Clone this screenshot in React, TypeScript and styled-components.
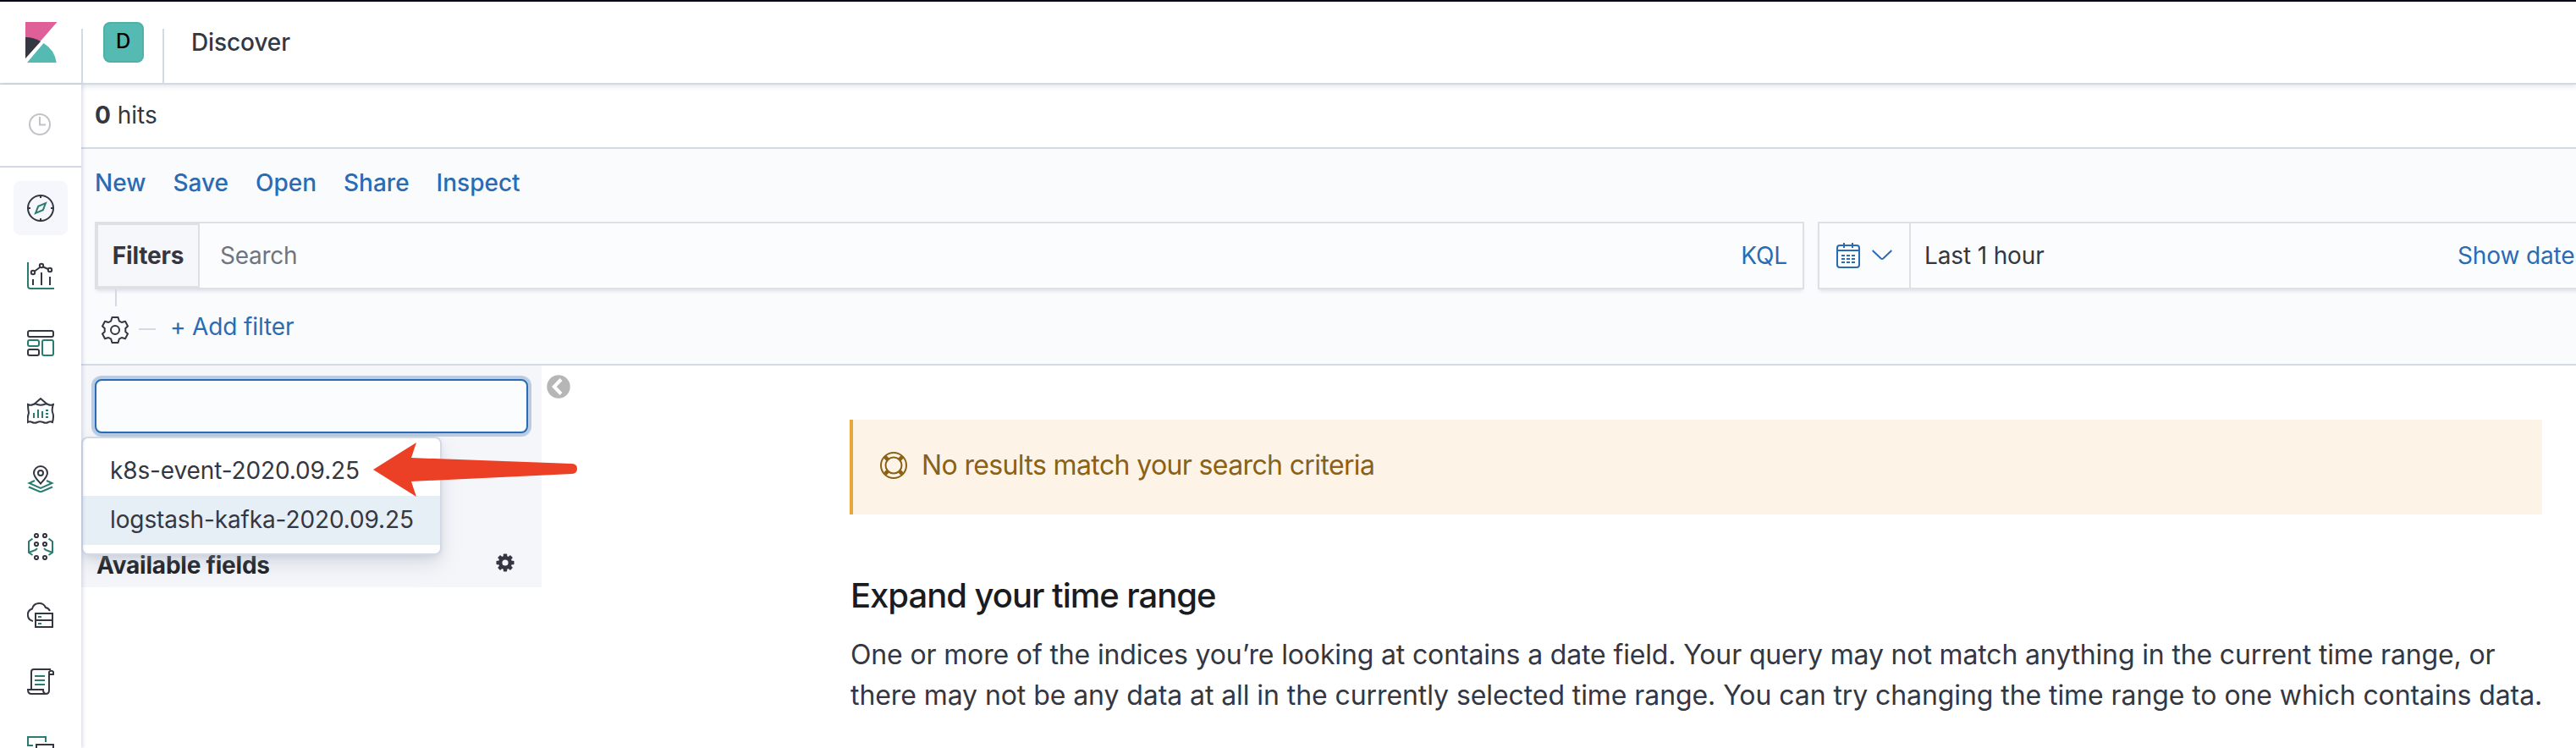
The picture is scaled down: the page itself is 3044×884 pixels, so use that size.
import React from 'react';
import styled, { createGlobalStyle, css } from 'styled-components';

const ink = '#343741';
const teal = '#2b7c70';
const blue = '#2a6bb3';
const line = '#d3dae6';

const GlobalStyle = createGlobalStyle`
  *, *::before, *::after { box-sizing: border-box; }
  html, body { margin: 0; padding: 0; background: #fff; overflow: hidden; }
  body {
    font-family: Inter, "Noto Sans", sans-serif;
    font-size: 28px;
    line-height: 40px;
    letter-spacing: -0.14px;
    color: ${ink};
    font-kerning: normal;
  }
  svg { display: block; flex: none; }
`;

const Page = styled.div`
  display: flex;
  flex-direction: column;
  width: 100vw;
  height: 884px;
  overflow: hidden;
  border-top: 2px solid #0c0418;
`;

const Header = styled.header`
  display: flex;
  flex: none;
  align-items: stretch;
  height: 98px;
  border-bottom: 2px solid ${line};
  position: relative;
  z-index: 1;
  box-shadow: 0 2px 6px rgba(152, 162, 179, 0.3);
`;

const HeaderCell = styled.div<{ $width: number }>`
  display: flex;
  align-items: center;
  justify-content: center;
  width: ${(p) => p.$width}px;
  padding-left: 1px;
`;

const HeaderRule = styled.div`
  align-self: flex-end;
  width: 2px;
  height: 64px;
  background: ${line};
`;

const SpaceBadge = styled.div`
  width: 48px;
  height: 48px;
  border-radius: 8px;
  background: #54bab2;
  box-shadow: inset 0 0 0 2px rgba(0, 0, 0, 0.05);
  color: #000;
  font-size: 24px;
  font-weight: 500;
  line-height: 46px;
  text-align: center;
`;

const Crumb = styled.h1`
  margin: 0;
  padding-left: 32px;
  font-size: 28px;
  line-height: 96px;
  font-weight: 500;
  letter-spacing: -0.1px;
`;

const Body = styled.div`
  display: flex;
  flex: 1;
  min-height: 0;
`;

const Nav = styled.nav`
  display: flex;
  flex-direction: column;
  flex: none;
  width: 96px;
  background: #fff;
  position: relative;
  z-index: 2;
  box-shadow: 2px 0 4px rgba(105, 112, 150, 0.22);
`;

const NavRecent = styled.div`
  display: flex;
  align-items: center;
  justify-content: center;
  flex: none;
  height: 98px;
  padding: 0 2px 2px 0;
  border-bottom: 2px solid ${line};
`;

const NavList = styled.div`
  display: flex;
  flex-direction: column;
  align-items: center;
  gap: 16px;
  padding-top: 16px;
`;

const NavItem = styled.a<{ $active?: boolean }>`
  display: flex;
  align-items: center;
  justify-content: center;
  flex: none;
  width: 64px;
  height: 64px;
  border-radius: 8px;
  ${(p) => p.$active && css`background: #f5f7fc;`}
`;

const Content = styled.main`
  flex: 1;
  min-width: 0;
  display: flex;
  flex-direction: column;
`;

const HitsBar = styled.div`
  flex: none;
  height: 76px;
  padding: 16px 0 0 16px;
  border-bottom: 2px solid ${line};
  letter-spacing: 0;

  strong { font-weight: 700; }
`;

const QueryArea = styled.section`
  flex: none;
  height: 256px;
  background: #fafbfd;
  border-bottom: 2px solid ${line};
`;

const Menu = styled.div`
  display: flex;
  gap: 32px;
  height: 86px;
  padding: 20px 0 0 16px;
`;

const MenuLink = styled.a`
  color: ${blue};
  font-weight: 500;
  letter-spacing: 0;
`;

const QueryRow = styled.div`
  display: flex;
  gap: 16px;
  height: 80px;
  padding-left: 16px;
`;

const Control = styled.div<{ $width: number }>`
  display: flex;
  flex: none;
  width: ${(p) => p.$width}px;
  height: 80px;
  line-height: 76px;
  border: 2px solid #dfe0e3;
  background: #fbfcfe;
  box-shadow: 0 4px 4px -2px rgba(152, 162, 179, 0.3);
`;

const FiltersButton = styled.div`
  flex: none;
  width: 122px;
  border: 2px solid #dfe0e3;
  background: #f5f7fb;
  line-height: 72px;
  font-weight: 700;
  letter-spacing: -0.2px;
  text-align: center;
`;

const Placeholder = styled.div`
  flex: 1;
  padding-left: 24px;
  color: #6f7480;
  letter-spacing: -0.25px;
`;

const InputLink = styled.a<{ $inset: number }>`
  flex: none;
  padding-right: ${(p) => p.$inset}px;
  color: ${blue};
  white-space: nowrap;
`;

const QuickSelect = styled.div`
  display: flex;
  align-items: center;
  flex: none;
  gap: 12px;
  width: 108px;
  padding-left: 20px;
  border-right: 2px solid #dfe0e3;
`;

const DateText = styled.div`
  flex: none;
  width: 646px;
  padding-left: 16px;
`;

const FilterRow = styled.div`
  display: flex;
  align-items: flex-start;
  padding-left: 24px;
`;

const FilterBranch = styled.div`
  display: flex;
  flex-direction: column;
  gap: 12px;
  width: 32px;

  &::before {
    content: '';
    width: 2px;
    height: 20px;
    margin-left: 16px;
    background: ${line};
  }
`;

const FilterDash = styled.div`
  width: 20px;
  height: 2px;
  margin: 46px 17px 0 12px;
  background: ${line};
`;

const AddFilter = styled.a`
  margin-top: 24px;
  color: ${blue};
`;

const Results = styled.div`
  display: flex;
  flex: 1;
  min-height: 0;
`;

const FieldPanel = styled.aside`
  display: flex;
  flex-direction: column;
  flex: none;
  width: 544px;
  height: 262px;
  padding: 16px;
  background: #f5f6fa;
  position: relative;
`;

const IndexInput = styled.div`
  flex: none;
  height: 64px;
  border: 2px solid ${blue};
  border-radius: 8px;
  background: #fbfcfe;
  box-shadow: 0 0 0 4px #b8cce4;
`;

const OptionMenu = styled.div`
  position: absolute;
  z-index: 1;
  left: 0;
  top: 84px;
  width: 426px;
  height: 140px;
  padding-top: 10px;
  border: 2px solid ${line};
  border-radius: 8px;
  background: #fff;
  box-shadow: 0 12px 24px -2px rgba(152, 162, 179, 0.3), 0 4px 8px -2px rgba(152, 162, 179, 0.3);
`;

const Option = styled.div<{ $hover?: boolean }>`
  height: 58px;
  padding-left: 32px;
  line-height: 56px;
  letter-spacing: -0.12px;
  ${(p) => p.$hover && css`background: #e6eef6;`}
`;

const FieldsHeading = styled.div`
  display: flex;
  align-items: center;
  justify-content: space-between;
  margin-top: auto;
  height: 40px;
  padding: 0 16px 0 2px;
  color: #1a1c21;
  font-weight: 700;
  letter-spacing: -0.22px;
  margin-bottom: -10px;

  svg { margin-top: -6px; }
`;

const CollapseColumn = styled.div`
  flex: none;
  width: 364px;
  padding: 11px 0 0 6px;
`;

const Message = styled.div`
  flex: none;
  width: 2000px;
  padding-top: 64px;
`;

const Callout = styled.div`
  display: flex;
  align-items: center;
  gap: 17px;
  height: 112px;
  padding: 0 0 4px 32px;
  border-left: 4px solid #e7a63a;
  background: #fdf4e7;
  color: #8a6116;
  font-size: 32px;
  letter-spacing: -0.63px;
`;

const Title = styled.h2`
  margin: 68px 0 0 1px;
  color: #1a1c21;
  font-size: 40px;
  line-height: 56px;
  font-weight: 500;
  letter-spacing: -1.02px;
`;

const Paragraph = styled.p`
  margin: 18px -20px 0 1px;
  font-size: 32px;
  line-height: 48px;
  letter-spacing: -0.15px;
  white-space: nowrap;
`;

const ParagraphLine = styled.span`
  display: block;

  & + & { letter-spacing: -0.08px; }
`;

const Annotation = styled.svg`
  position: absolute;
  z-index: 3;
  left: 344px;
  top: 90px;
`;

const Icon = ({ children, size = 32 }: { children: React.ReactNode; size?: number }) => (
  <svg width={size} height={size} viewBox="0 0 32 32" fill="none" stroke={ink} strokeWidth="2">
    {children}
  </svg>
);

const KibanaLogo = () => (
  <svg width="38" height="48" viewBox="0 0 38 48">
    <path d="M0 0h37.5L0 43z" fill="#df5f99" />
    <path d="M0 18a34 34 0 0 1 18 5L0 43z" fill="#343741" />
    <path d="M21.5 25A32 32 0 0 1 36.7 48H2z" fill="#54bab2" />
  </svg>
);

const icons: Record<string, React.ReactNode> = {
  discover: (
    <Icon>
      <circle cx="16" cy="16" r="15" />
      <path d="M16 0v4M16 28v4M0 16h4M28 16h4" />
      <path d="M22 10l-3.200 8.200L10 22l3.200-8.200z" stroke={teal} />
    </Icon>
  ),
  visualize: (
    <Icon>
      <path d="M1 0v28a3 3 0 0 0 3 3h28" stroke={teal} />
      <path d="M7 27v-7M17 27V12M27 27V17M9 10.500l6-4.500M19.200 5.500l5.600 2.500" />
      <circle cx="7" cy="12" r="2.200" />
      <circle cx="17" cy="4" r="2.200" />
      <circle cx="27" cy="9" r="2.200" />
    </Icon>
  ),
  dashboard: (
    <Icon>
      <rect x="1" y="1" width="30" height="7" rx="2" />
      <rect x="1" y="23" width="13" height="7" rx="2" />
      <rect x="1" y="12" width="13" height="7" rx="2" stroke={teal} />
      <rect x="18" y="12" width="13" height="18" rx="2" stroke={teal} />
    </Icon>
  ),
  canvas: (
    <Icon>
      <path d="M8 8l8-7 8 7" />
      <path d="M1 8q3 1.500 6 0 3-1.500 5 0 4 1.500 8 0 3-1.500 5 0 3 1.500 6 0-2 5-1 9 2 5 0 12-3-1.500-5 0-3 1.500-6 0-4-1.500-7 0-3 1.500-6 0-3-1.500-5 0-1-5 1-11Q1 13 1 8z" />
      <path d="M8 24v-6M13 24V14M18 24v-8M22 15h3M22 19h3M22 23h3" stroke={teal} />
    </Icon>
  ),
  maps: (
    <Icon>
      <path d="M9 18l-6.500 3L16 27l13.500-6-6.500-3M2 25.500l14 6 14-6" stroke={teal} />
      <path d="M16 21.500C12 17 8 13.500 8 9a8 8 0 0 1 16 0c0 4.500-4 8-8 12.500z" />
      <circle cx="16" cy="9" r="3" />
    </Icon>
  ),
  ml: (
    <Icon>
      <circle cx="11" cy="3" r="2.100" />
      <circle cx="21" cy="3" r="2.100" />
      <circle cx="11" cy="13" r="2.100" />
      <circle cx="21" cy="13" r="2.100" />
      <circle cx="11" cy="29" r="2.100" />
      <circle cx="21" cy="29" r="2.100" />
      <path d="M6.500 6.500L2 10v13l4.500 3M25.500 6.500L30 10v13l-4.500 3M2 23l8-3 2-2M30 23l-8-3-2-2" stroke={teal} />
    </Icon>
  ),
  infra: (
    <Icon>
      <path d="M7 24a7.500 7.500 0 0 1-1-14.500A8.500 8.500 0 0 1 22 8a7 7 0 0 1 5 4" />
      <path d="M10 15h20v16H10zM10 23h20" />
      <path d="M13 19h4M13 27h4" stroke={teal} />
    </Icon>
  ),
  logs: (
    <Icon>
      <path d="M5 24V4a3 3 0 0 1 3-3h20M26 8V4a3 3 0 0 1 5 0v3h-5M26 7v19q0 4-4 4M22 30H5q-4 0-4-5h18q0 5 4 5" />
      <path d="M9 9h12M9 14h12M9 19h12" stroke={teal} />
    </Icon>
  ),
  apm: (
    <Icon>
      <path d="M7 11H1V1h21v6" stroke={teal} />
      <path d="M11 15V10h20v12H13z" />
    </Icon>
  ),
};

const ClockIcon = () => (
  <svg width="26" height="26" viewBox="0 0 26 26" fill="none" stroke="#c2c3c6" strokeWidth="2">
    <circle cx="13" cy="13" r="12" />
    <path d="M13 4v9.500h7" />
  </svg>
);

const GearIcon = () => (
  <Icon>
    <path
      strokeLinejoin="round"
      d="M12.500 1h7l1.300 4.300 3 1.700 4.200-1.200L31 11.500 28.300 14v4l2.700 2.500-3 5.700-4.200-1.200-3 1.700L19.500 31h-7l-1.300-4.300-3-1.700L4 26.200 1 20.500 3.700 18v-4L1 11.500l3-5.700L8.200 7l3-1.700z"
    />
    <circle cx="16" cy="16" r="5" />
  </Icon>
);

const CogIcon = () => (
  <svg width="22" height="22" viewBox="0 0 22 22">
    <circle cx="11" cy="11" r="5.500" fill="none" stroke={ink} strokeWidth="5" />
    {[0, 45, 90, 135].map((a) => (
      <rect key={a} x="8.800" y="0.500" width="4.400" height="21" rx="0.800" fill={ink} transform={`rotate(${a} 11 11)`} />
    ))}
    <circle cx="11" cy="11" r="3.600" fill="#f5f6fa" />
  </svg>
);

const CalendarIcon = () => (
  <svg width="30" height="32" viewBox="0 0 30 32" fill="none" stroke={blue} strokeWidth="2">
    <rect x="1" y="4" width="26" height="26" rx="3" />
    <path d="M1 10h26M9 1v6M19 1v6" />
    <path d="M6 16h16M6 20h16M6 24h16" strokeDasharray="4 2" />
  </svg>
);

const ChevronIcon = () => (
  <svg width="24" height="14" viewBox="0 0 24 14" fill="none" stroke={blue} strokeWidth="2">
    <path d="M.7 1l10 9.500q1.300 1 2.600 0L23.300 1" />
  </svg>
);

const HelpIcon = () => (
  <svg width="32" height="32" viewBox="0 0 32 32" fill="none" stroke="#8a6116" strokeWidth="2">
    <circle cx="16" cy="16" r="15" />
    <circle cx="16" cy="16" r="9.500" />
    <path d="M5.800 5.800l4 4M26.200 5.800l-4 4M5.800 26.200l4-4M26.200 26.200l-4-4" strokeWidth="4.500" />
  </svg>
);

const CollapseIcon = () => (
  <svg width="28" height="28" viewBox="0 0 28 28" fill="none">
    <circle cx="14" cy="14" r="13.700" fill="#b6b6b7" />
    <path d="M17 5.500L8.800 14l8.200 8.500" stroke="#fff" strokeWidth="4" />
  </svg>
);

export default function App() {
  return (
    <Page>
      <GlobalStyle />
      <Header>
        <HeaderCell $width={96}><KibanaLogo /></HeaderCell>
        <HeaderRule />
        <HeaderCell $width={94}><SpaceBadge>D</SpaceBadge></HeaderCell>
        <HeaderRule />
        <Crumb>Discover</Crumb>
      </Header>
      <Body>
        <Nav>
          <NavRecent><ClockIcon /></NavRecent>
          <NavList>
            {Object.entries(icons).map(([name, icon]) => (
              <NavItem key={name} $active={name === 'discover'}>{icon}</NavItem>
            ))}
          </NavList>
        </Nav>
        <Content>
          <HitsBar><strong>0</strong> hits</HitsBar>
          <QueryArea>
            <Menu>
              {['New', 'Save', 'Open', 'Share', 'Inspect'].map((label) => (
                <MenuLink key={label}>{label}</MenuLink>
              ))}
            </Menu>
            <QueryRow>
              <Control $width={2020}>
                <FiltersButton>Filters</FiltersButton>
                <Placeholder>Search</Placeholder>
                <InputLink $inset={18}>KQL</InputLink>
              </Control>
              <Control $width={1100}>
                <QuickSelect><CalendarIcon /><ChevronIcon /></QuickSelect>
                <DateText>Last 1 hour</DateText>
                <InputLink $inset={0}>Show date</InputLink>
              </Control>
            </QueryRow>
            <FilterRow>
              <FilterBranch><GearIcon /></FilterBranch>
              <FilterDash />
              <AddFilter>+ Add filter</AddFilter>
            </FilterRow>
          </QueryArea>
          <Results>
            <FieldPanel>
              <IndexInput />
              <OptionMenu>
                <Option>k8s-event-2020.09.25</Option>
                <Option $hover>logstash-kafka-2020.09.25</Option>
              </OptionMenu>
              <FieldsHeading>Available fields<CogIcon /></FieldsHeading>
              <Annotation width="244" height="66" viewBox="0 0 244 66">
                <path d="M1 33L52 1l-6 18 190 7q6 .5 6 6t-6 6L46 47l6 18z" fill="#ec4026" />
              </Annotation>
            </FieldPanel>
            <CollapseColumn><CollapseIcon /></CollapseColumn>
            <Message>
              <Callout><HelpIcon />No results match your search criteria</Callout>
              <Title>Expand your time range</Title>
              <Paragraph>
                <ParagraphLine>
                  One or more of the indices you’re looking at contains a date field. Your query may not match anything in the current time range, or
                </ParagraphLine>
                <ParagraphLine>
                  there may not be any data at all in the currently selected time range. You can try changing the time range to one which contains data.
                </ParagraphLine>
              </Paragraph>
            </Message>
          </Results>
        </Content>
      </Body>
    </Page>
  );
}
